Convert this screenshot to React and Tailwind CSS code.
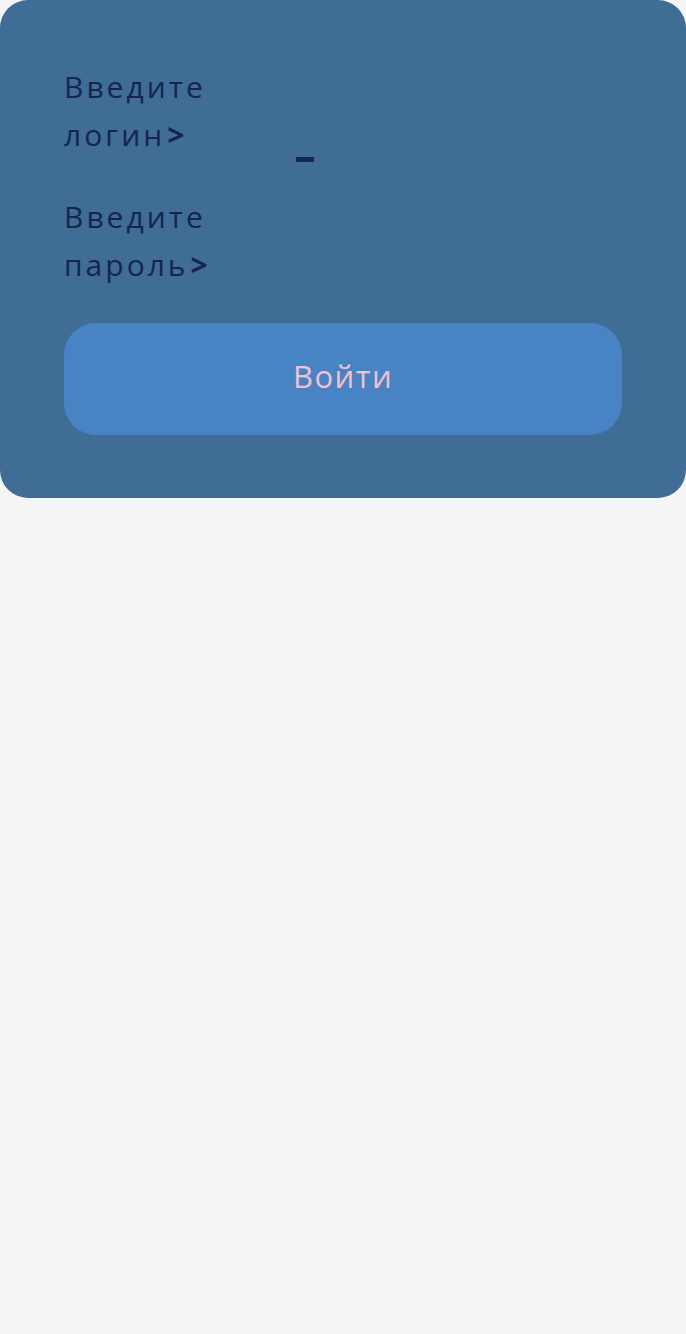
import React from 'react';

const Field = ({ label, caret }) => (
  <div className="flex items-end">
    <label className="w-[170px] text-[30px] leading-[48px] tracking-[3px] text-[#15254d]">
      {label}
    </label>
    <div className="relative flex-1 h-[96px]">
      {caret && (
        <span className="absolute left-[62px] top-[94px] w-[18px] h-[5px] bg-[#15254d]" />
      )}
    </div>
  </div>
);

export default function App() {
  return (
    <div className="min-h-screen bg-[#f5f5f5]" style={{ fontFamily: '"Open Sans", "Noto Sans", sans-serif' }}>
      <div className="bg-[#3f6d96] rounded-[28px] px-16 pt-[63px] pb-[63px] flex flex-col gap-[34px]">
        <Field label={<>Введите логин<b className="ml-[2px]">&gt;</b></>} caret />
        <Field label={<>Введите пароль<b className="ml-[2px]">&gt;</b></>} />
        <button className="h-[112px] pb-[6px] rounded-[32px] bg-[#4884c4] text-[#f4bfcf] text-[31px] tracking-[1.5px]">
          Войти
        </button>
      </div>
    </div>
  );
}
